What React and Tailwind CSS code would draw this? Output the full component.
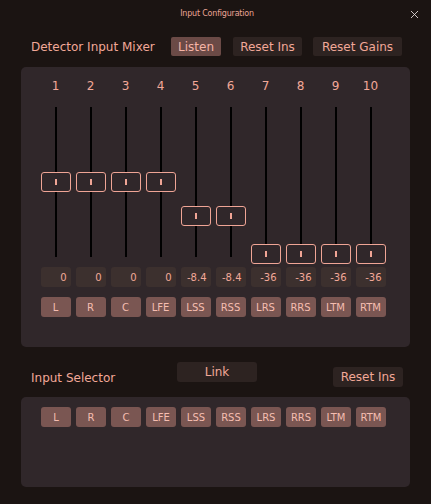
import { X } from "lucide-react";

const channels = [
  { n: "1", v: "0", l: "L", pos: 65 },
  { n: "2", v: "0", l: "R", pos: 65 },
  { n: "3", v: "0", l: "C", pos: 65 },
  { n: "4", v: "0", l: "LFE", pos: 65 },
  { n: "5", v: "-8.4", l: "LSS", pos: 99 },
  { n: "6", v: "-8.4", l: "RSS", pos: 99 },
  { n: "7", v: "-36", l: "LRS", pos: 137 },
  { n: "8", v: "-36", l: "RRS", pos: 137 },
  { n: "9", v: "-36", l: "LTM", pos: 137 },
  { n: "10", v: "-36", l: "RTM", pos: 137 },
];

const font = { fontFamily: '"DejaVu Sans", "Open Sans", sans-serif' };

function Fader({ pos }) {
  return (
    <div className="relative h-[150px] w-[35px] flex justify-center">
      <div className="w-[2px] h-full bg-black" />
      <div
        className="absolute left-[2.5px] w-[30px] h-[20px] rounded-[3px] border-[1.5px] border-[#f0a596] bg-[#30272a] flex items-center justify-center"
        style={{ top: pos }}
      >
        <div className="w-[2px] h-[6px] bg-[#f0a596]" />
      </div>
    </div>
  );
}

export default function App() {
  return (
    <div
      className="w-[431px] h-[504px] bg-[#1b1412] text-[#f2a898] overflow-hidden"
      style={font}
    >
      {/* Title */}
      <div className="h-[28px] flex items-center px-[10px]">
        <div className="w-[16px]" />
        <div className="flex-1 text-center text-[8px] tracking-tight text-[#e9a495]">
          Input Configuration
        </div>
        <X size={13} strokeWidth={1.6} className="text-[#e8e0de]" />
      </div>

      {/* Mixer header */}
      <div className="flex items-center h-[19px] mt-[9px] pl-[31px]">
        <span className="text-[12px] w-[140px]">Detector Input Mixer</span>
        <button className="h-[19px] w-[50px] rounded-[2px] bg-[#6b4a46] text-[12px] text-[#f6b4a6]">
          Listen
        </button>
        <button className="ml-[12px] h-[19px] w-[69px] rounded-[2px] bg-[#2d2321] text-[12px]">
          Reset Ins
        </button>
        <button className="ml-[11px] h-[19px] w-[89px] rounded-[2px] bg-[#2d2321] text-[12px]">
          Reset Gains
        </button>
      </div>

      {/* Mixer panel */}
      <div className="mx-[21px] mt-[11px] h-[280px] rounded-[5px] bg-[#30272a] pl-[17px] pt-[12px]">
        <div className="flex">
          {channels.map((c) => (
            <div key={c.n} className="w-[35px] flex flex-col items-center">
              <div className="h-[14px] text-[12px] leading-[14px]">{c.n}</div>
              <div className="mt-[14px]">
                <Fader pos={c.pos} />
              </div>
              <div className="mt-[10px] w-[30px] h-[20px] rounded-[3px] bg-[#3c302e] text-[10px] flex items-center justify-end pr-[4px]">
                {c.v}
              </div>
              <div className="mt-[10px] w-[30px] h-[20px] rounded-[3px] bg-[#7a5652] text-[10px] text-[#f5bdb0] flex items-center justify-center">
                {c.l}
              </div>
            </div>
          ))}
        </div>
      </div>

      {/* Selector header */}
      <div className="flex h-[25px] mt-[15px] pl-[31px] pr-[28px]">
        <span className="text-[12px] w-[146px] mt-[7px]">Input Selector</span>
        <button className="h-[20px] w-[80px] rounded-[3px] bg-[#2d2321] text-[12px]">
          Link
        </button>
        <div className="flex-1" />
        <button className="mt-[5px] h-[20px] w-[70px] rounded-[3px] bg-[#2d2321] text-[12px]">
          Reset Ins
        </button>
      </div>

      {/* Selector panel */}
      <div className="mx-[21px] mt-[10px] h-[90px] rounded-[5px] bg-[#30272a] pl-[20px] pt-[10px]">
        <div className="flex gap-[5px]">
          {channels.map((c) => (
            <div
              key={c.l}
              className="w-[30px] h-[20px] rounded-[3px] bg-[#7a5652] text-[10px] text-[#f5bdb0] flex items-center justify-center"
            >
              {c.l}
            </div>
          ))}
        </div>
      </div>
    </div>
  );
}
